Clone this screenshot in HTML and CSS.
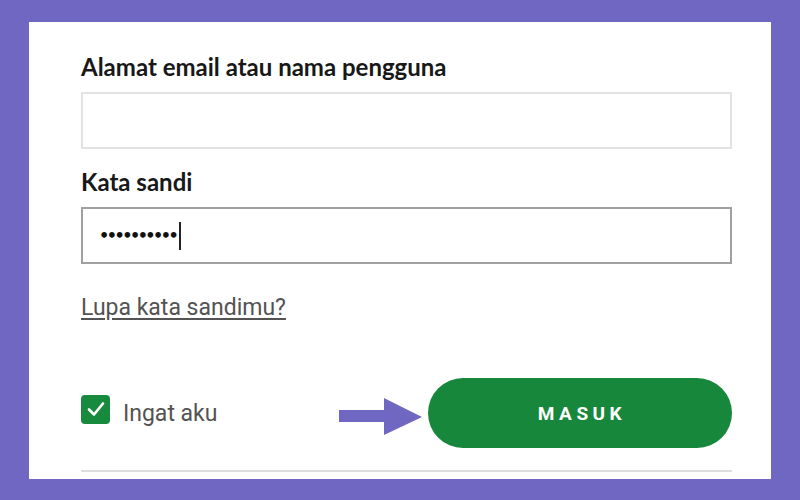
FILE: index.html
```html
<!DOCTYPE html>
<html lang="id">
<head>
  <meta charset="UTF-8" />
  <meta name="viewport" content="width=device-width, initial-scale=1.0" />
  <title>Masuk</title>
  <link rel="stylesheet" href="styles.css">
</head>

<body>
  <div class="panel"> <!-- Kotak putih formulir masuk -->
    <form class="form-masuk" onsubmit="return false">
      <label class="label" for="email">Alamat email atau nama pengguna</label>
      <input class="input" type="text" id="email" />

      <label class="label" for="sandi">Kata sandi</label>
      <div class="input input-aktif" id="sandi">
        <span class="titik">••••••••••</span><span class="kursor"></span>
      </div>

      <a class="lupa" href="#">Lupa kata sandimu?</a>

      <div class="baris-bawah">
        <label class="ingat">
          <span class="centang">
            <svg width="18" height="16" viewBox="0 0 18 16"><path d="M2 8.5 L7 13.5 L16 2.5" fill="none" stroke="#fff" stroke-width="2.6" stroke-linecap="round" stroke-linejoin="round"/></svg>
          </span>
          Ingat aku
        </label>
        <div class="aksi">
          <svg class="panah" width="84" height="38" viewBox="0 0 84 38"><path d="M0 12 H45 V0 L83 19 L45 37 V24 H0 Z" fill="#6f67c2"/></svg>
          <button class="tombol" type="submit">MASUK</button>
        </div>
      </div>

      <hr class="garis" />
    </form>
  </div>
</body>

</html>
```

FILE: styles.css
```css
html,
body {
  height: 100%;
}

body {
  margin: 0;
  background-color: #6f67c2;
  font-family: "Noto Sans", Arial, sans-serif;
  padding: 22px 29px 21px 29px;
  box-sizing: border-box;
}

.panel {
  background-color: #fff;
  height: 100%;
  padding: 0 39px 0 52px;
  overflow: hidden;
}

.form-masuk {
  display: flex;
  flex-direction: column;
  padding-top: 31px;
}

.label {
  font-family: Lato, "Noto Sans", sans-serif;
  font-weight: bold;
  font-size: 24px;
  line-height: 28px;
  color: #181818;
  margin-bottom: 11px;
}

.input {
  height: 57px;
  border: 2px solid #e2e2e2;
  box-sizing: border-box;
  margin: 0 0 19px 0;
  padding: 0 16px;
  font-size: 16px;
}

.input-aktif {
  border: 2px solid #a0a0a0;
  display: flex;
  align-items: center;
  margin-bottom: 31px;
}

.titik {
  font-family: "DejaVu Sans", sans-serif;
  font-weight: bold;
  font-size: 16px;
  letter-spacing: -2.5px;
  color: #111;
}

.kursor {
  display: inline-block;
  width: 2px;
  height: 28px;
  background-color: #222;
  margin-left: 3px;
}

.lupa {
  align-self: flex-start;
  font-family: Roboto, sans-serif;
  font-size: 23px;
  line-height: 26px;
  color: #535353;
  text-decoration: underline;
  text-underline-offset: 3px;
}

.baris-bawah {
  display: flex;
  justify-content: space-between;
  align-items: center;
  margin-top: 57px;
}

.ingat {
  display: flex;
  align-items: center;
  gap: 13px;
  font-family: Roboto, sans-serif;
  font-size: 23px;
  color: #535353;
}

.centang {
  width: 29px;
  height: 29px;
  border-radius: 4px;
  background-color: #188a3e;
  display: flex;
  align-items: center;
  justify-content: center;
  margin-bottom: 8px;
}

.aksi {
  display: flex;
  align-items: center;
  gap: 5px;
}

.panah {
  margin-top: 7px;
}

.tombol {
  width: 304px;
  height: 70px;
  border: none;
  border-radius: 35px;
  background-color: #17873c;
  color: #fff;
  font-family: Roboto, sans-serif;
  font-weight: bold;
  font-size: 19px;
  letter-spacing: 4.5px;
  text-indent: 4px;
  cursor: pointer;
}

.garis {
  width: 100%;
  margin: 22px 0 0 0;
  border: none;
  border-top: 2px solid #dedede;
}
```
